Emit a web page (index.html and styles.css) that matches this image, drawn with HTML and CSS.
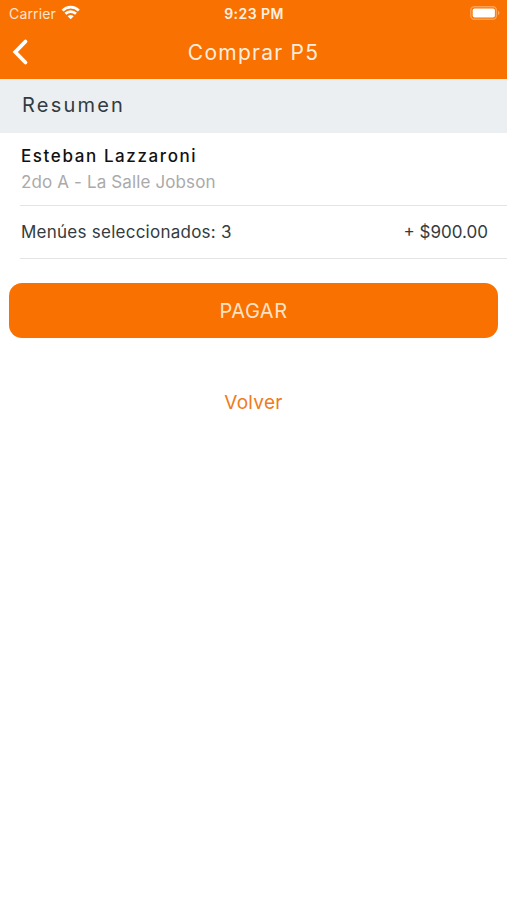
FILE: index.html
```html
<!DOCTYPE html>
<html lang="es">
<head>
<meta charset="utf-8">
<title>Comprar P5</title>
<link rel="stylesheet" href="styles.css">
</head>
<body>
<header class="header">
  <div class="status">
    <div class="carrier"><span>Carrier</span>
      <svg class="wifi" width="20" height="15" viewBox="0 0 20 15" fill="none" stroke="#fff" stroke-width="2.7"><path d="M1.6 5.6C6 1 13.4 1 17.8 5.6M4.4 8.8c3-3 7.6-3 10.6 0"/><path d="M6.7 11.3q3-2.5 6 0l-3 3z" fill="#fff" stroke="none"/></svg>
    </div>
    <span class="time">9:23 PM</span>
    <svg class="battery" width="31" height="15" viewBox="0 0 31 15"><rect x=".8" y=".8" width="25.6" height="12.4" rx="3.5" fill="none" stroke="#ffa152" stroke-width="1.4"/><rect x="2.7" y="2.5" width="22.2" height="9" rx="1.8" fill="#fff"/><path d="M28 4.8q3 2.2 0 4.4z" fill="#ffad65"/></svg>
  </div>
  <nav class="nav">
    <svg class="back" width="18" height="28" viewBox="0 0 18 28" fill="none" stroke="#fff" stroke-width="3.8" stroke-linecap="round" stroke-linejoin="miter"><path d="M14.5 3.5 4.3 14l10.2 10.5"/></svg>
    <h1 class="title">Comprar P5</h1>
    <span></span>
  </nav>
</header>
<main>
  <h2 class="section">Resumen</h2>
  <div class="list">
    <div class="person">
      <div class="name">Esteban Lazzaroni</div>
      <div class="grade">2do A - La Salle Jobson</div>
    </div>
    <div class="menus"><span class="label">Menúes seleccionados: 3</span><span class="price">+ $900.00</span></div>
  </div>
  <div class="actions">
    <button class="pay">PAGAR</button>
    <a class="return">Volver</a>
  </div>
</main>
</body>
</html>
```
FILE: styles.css
```css
* { box-sizing: border-box; }
body { margin: 0; background: #fff; color: #343b40; font-family: Inter, "Liberation Sans", sans-serif; }
h1, h2 { margin: 0; font-weight: 400; }
svg { display: block; }
.header { height: 79px; background: #f97100; color: #fff; }
.status { display: grid; grid-template-columns: 1fr auto 1fr; height: 27px; align-items: center; padding: 0 6px 0 9px; font-size: 14px; }
.carrier { display: flex; align-items: center; gap: 5px; color: #ffe5ce; letter-spacing: .15px; }
.wifi { margin-top: -2px; }
.time { margin-left: -2px; font-weight: 600; letter-spacing: .45px; color: #fff1e2; }
.battery { justify-self: end; }
.nav { display: grid; grid-template-columns: 1fr auto 1fr; height: 50px; align-items: center; padding: 0 11px; }
.title { font-size: 21px; letter-spacing: 1.25px; color: #ffeddc; }
.section { height: 54px; padding-left: 22px; background: #ebeff1; font-size: 20px; line-height: 53px; letter-spacing: 2.2px; }
.list { padding-left: 20px; }
.person { height: 73px; padding: 12px 0 0 1px; border-bottom: 1px solid #e4e4e6; }
.name { font-size: 17px; line-height: 23px; font-weight: 500; color: #111; letter-spacing: 1.6px; }
.grade { font-size: 17px; line-height: 28px; color: #aaa; letter-spacing: .13px; }
.menus { display: flex; height: 53px; align-items: center; justify-content: space-between; padding: 0 19px 0 1px; border-bottom: 1px solid #e4e4e6; font-size: 17px; }
.label { letter-spacing: .25px; }
.actions { display: flex; flex-direction: column; align-items: center; padding: 24px 9px; }
.pay { width: 100%; height: 55px; padding: 0; border: 0; border-radius: 13px; background: #f97100; color: #ffe2c6; font: 400 20px Inter, sans-serif; letter-spacing: .5px; }
.return { margin-top: 50px; font-size: 19px; line-height: 29px; letter-spacing: .3px; color: #ef7b20; }
```
